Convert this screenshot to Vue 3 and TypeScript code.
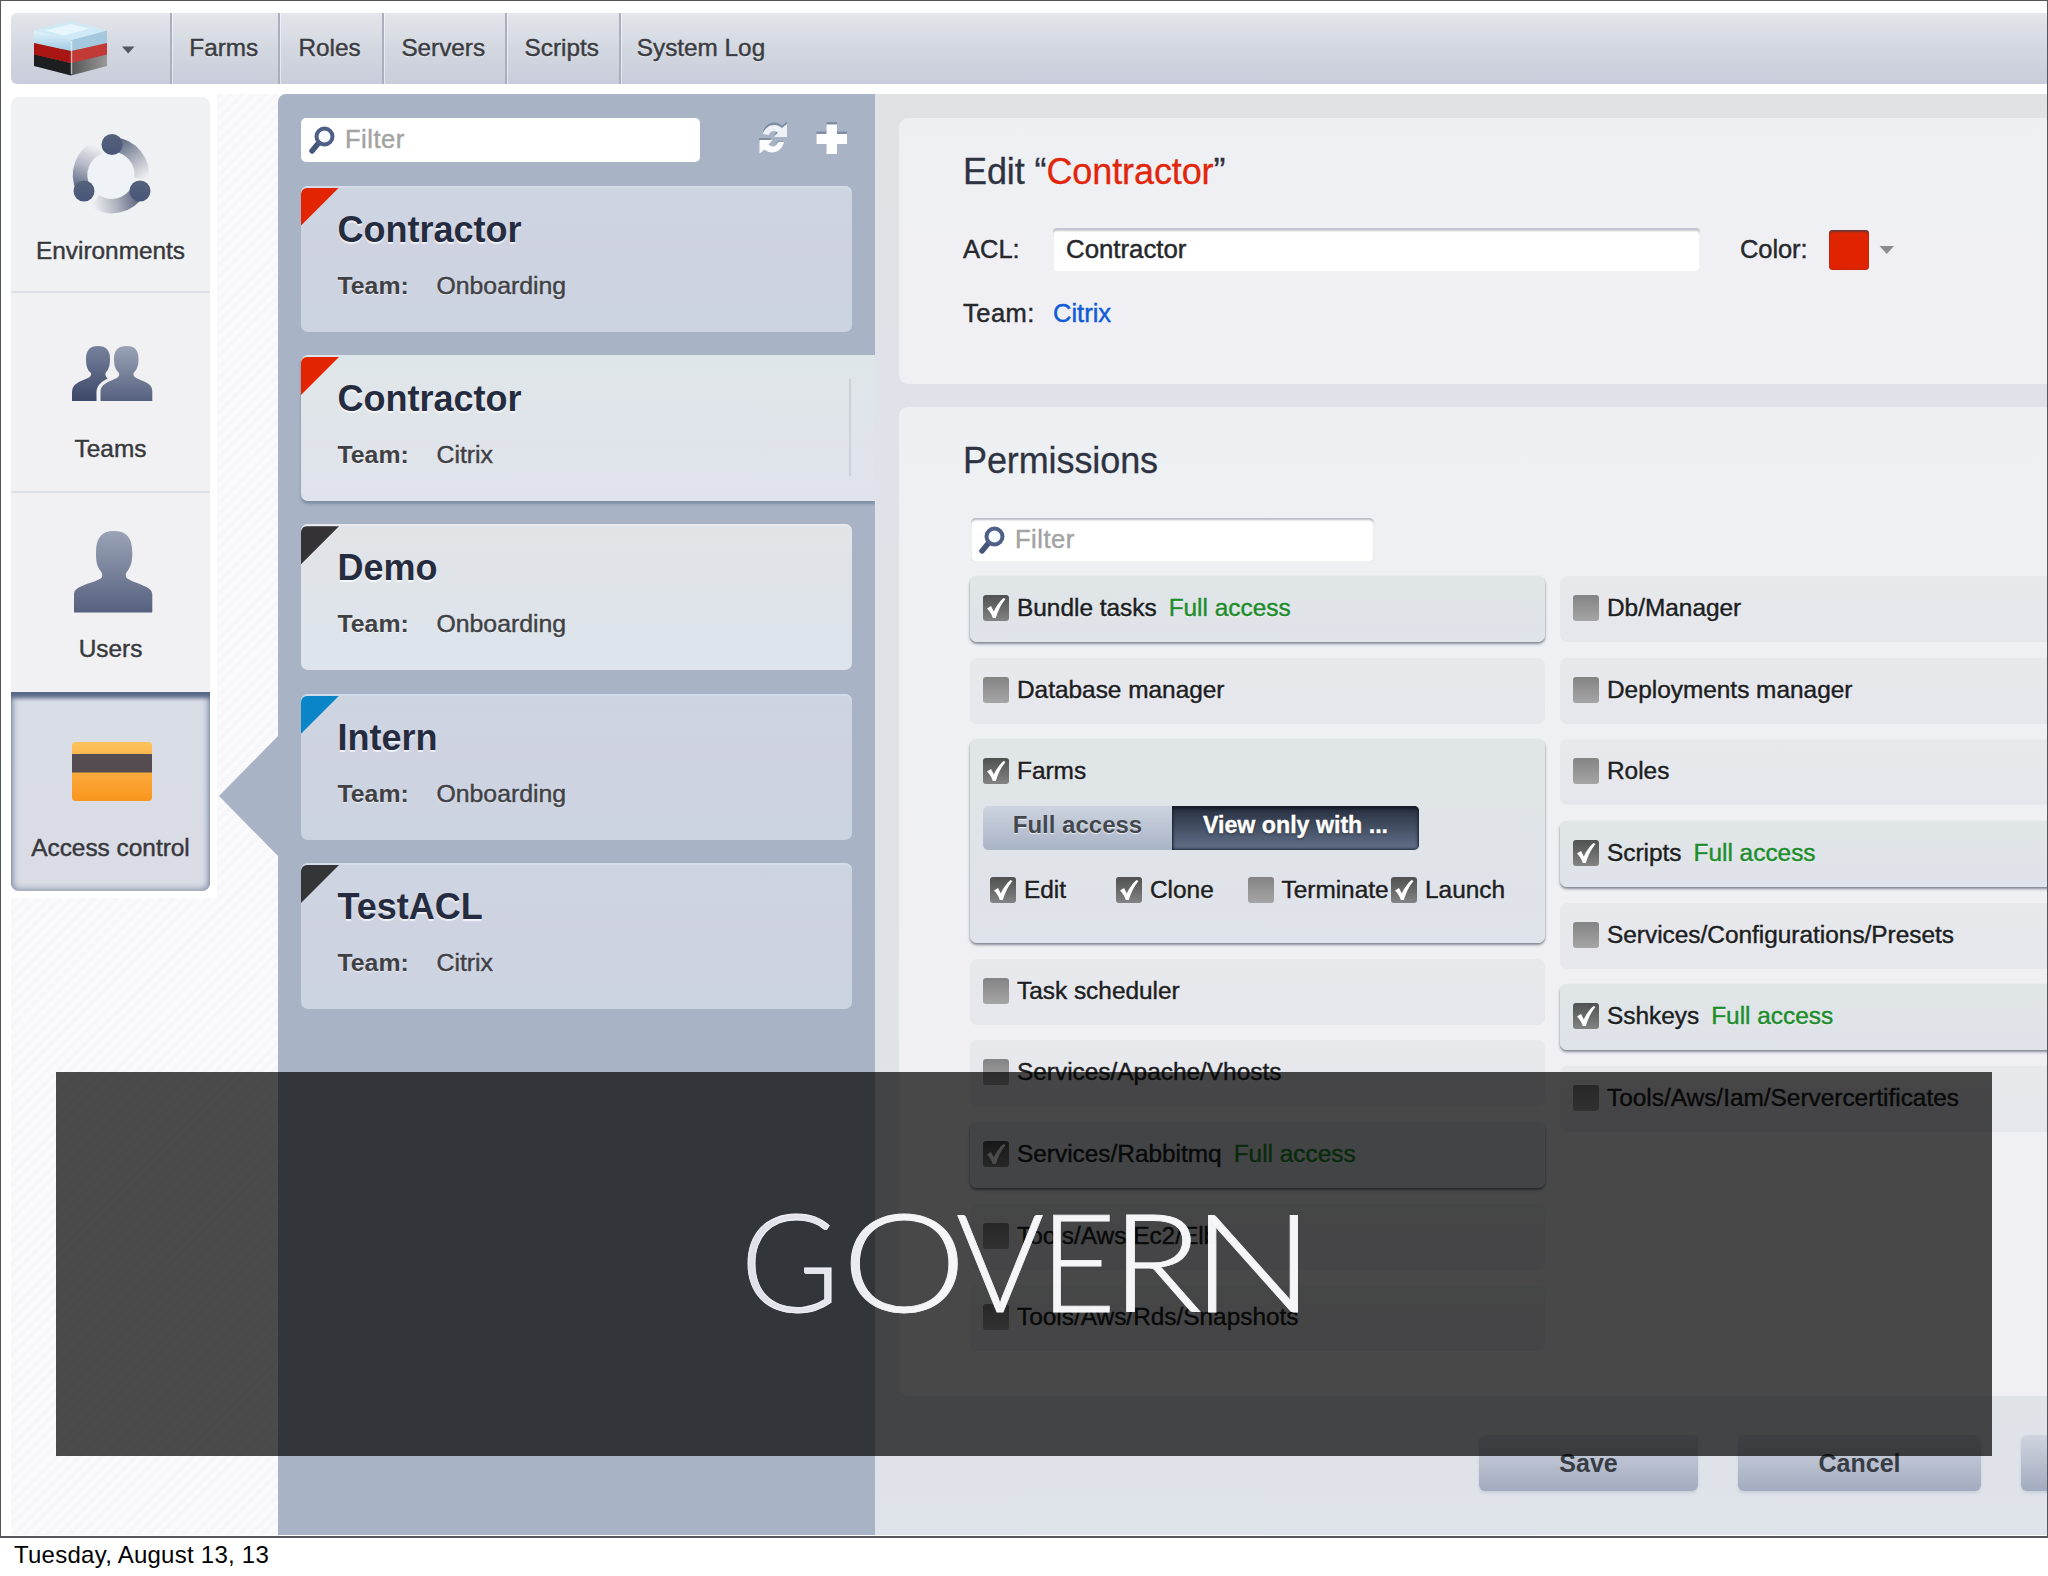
<script setup lang="ts">
interface Acl { name: string; team: string; color: string; state?: string }
interface Perm { name: string; on?: boolean; actions?: { name: string; on: boolean; w: number }[] }

const nav = [
  { label: 'Farms', w: 107.5 },
  { label: 'Roles', w: 104 },
  { label: 'Servers', w: 123.5 },
  { label: 'Scripts', w: 113.5 },
  { label: 'System Log', w: 165 },
]

// Banner letters: left origin and advance width of each
const letters = [
  { c: 'G', x: 740, w: 100 },
  { c: 'O', x: 842, w: 124.5 },
  { c: 'V', x: 956, w: 88 },
  { c: 'E', x: 1040, w: 76 },
  { c: 'R', x: 1111, w: 91 },
  { c: 'N', x: 1191.5, w: 123 },
]

const acls: Acl[] = [
  { name: 'Contractor', team: 'Onboarding', color: '#e22400' },
  { name: 'Contractor', team: 'Citrix', color: '#e22400', state: 'selected' },
  { name: 'Demo', team: 'Onboarding', color: '#353235', state: 'light' },
  { name: 'Intern', team: 'Onboarding', color: '#0a85c8' },
  { name: 'TestACL', team: 'Citrix', color: '#333536' },
]

const columns: Perm[][] = [
  [
    { name: 'Bundle tasks', on: true },
    { name: 'Database manager' },
    {
      name: 'Farms',
      on: true,
      actions: [
        { name: 'Edit', on: true, w: 126 },
        { name: 'Clone', on: true, w: 131.5 },
        { name: 'Terminate', on: false, w: 143.5 },
        { name: 'Launch', on: true, w: 120 },
      ],
    },
    { name: 'Task scheduler' },
    { name: 'Services/Apache/Vhosts' },
    { name: 'Services/Rabbitmq', on: true },
    { name: 'Tools/Aws/Ec2/Elb' },
    { name: 'Tools/Aws/Rds/Snapshots' },
  ],
  [
    { name: 'Db/Manager' },
    { name: 'Deployments manager' },
    { name: 'Roles' },
    { name: 'Scripts', on: true },
    { name: 'Services/Configurations/Presets' },
    { name: 'Sshkeys', on: true },
    { name: 'Tools/Aws/Iam/Servercertificates' },
  ],
]
</script>

<template>
  <div class="page">
    <div class="slide">
      <nav class="nav">
        <div class="brand">
          <svg width="159" height="71" viewBox="0 0 159 71">
            <defs>
              <linearGradient id="ice" x1="0" y1="0" x2="0" y2="1"><stop offset="0" stop-color="#e4f4fb" /><stop offset="1" stop-color="#9fcbe4" /></linearGradient>
              <linearGradient id="coal" x1="0" y1="0" x2="1" y2="0"><stop offset="0" stop-color="#555" /><stop offset="1" stop-color="#999" /></linearGradient>
            </defs>
            <path d="M23 41 L60 50 V62.500 L23 53Z" fill="#1c1e1f" />
            <path d="M60 50 L96 41 V53 L60 62.500Z" fill="url(#coal)" />
            <path d="M23 41 L60 50 L96 41 L60 34Z" fill="#26282a" />
            <path d="M23 29 L60 38 V50 L23 41.500Z" fill="#a81512" />
            <path d="M60 38 L96 29 V41.500 L60 50Z" fill="#c23a35" />
            <path d="M23 17.500 L60 27 V38 L23 30Z" fill="url(#ice)" />
            <path d="M60 27 L96 17.500 V30 L60 38Z" fill="#a4c9df" />
            <path d="M23 17.500 L60 8 L96 17.500 L60 27Z" fill="#cfeaf6" />
            <path d="M34 17.500 L60 11 L78 15.500 L54 22.500Z" fill="#e6f6fc" />
            <path d="M60.500 28 V61" stroke="#fff" stroke-opacity=".6" stroke-width="1.500" />
            <path d="M111 33.500 H123.500 L117.200 40.500Z" fill="#55565e" />
          </svg>
        </div>
        <a v-for="n in nav" :key="n.label" class="nav-item" :style="{ width: n.w + 'px' }">{{ n.label }}</a>
      </nav>

      <div class="body">
        <aside class="side">
          <div class="menu">
            <div class="tile first">
              <svg width="199" height="147" viewBox="0 0 199 147">
                <defs>
                  <linearGradient id="dot" x1="0" y1="0" x2="0" y2="1"><stop offset="0" stop-color="#56637c" /><stop offset="1" stop-color="#485578" /></linearGradient>
                  <linearGradient id="a1" gradientUnits="userSpaceOnUse" x1="104" y1="48" x2="131" y2="84"><stop offset="0" stop-color="#5f6c84" /><stop offset=".45" stop-color="#a4aab8" /><stop offset="1" stop-color="#f0f0f2" /></linearGradient>
                  <linearGradient id="a2" gradientUnits="userSpaceOnUse" x1="126" y1="98" x2="82" y2="108"><stop offset="0" stop-color="#5d6780" /><stop offset=".5" stop-color="#b0b3c0" /><stop offset="1" stop-color="#f0f0f3" /></linearGradient>
                  <linearGradient id="a3" gradientUnits="userSpaceOnUse" x1="72" y1="92" x2="88" y2="50"><stop offset="0" stop-color="#606c88" /><stop offset=".5" stop-color="#b4b7c6" /><stop offset="1" stop-color="#f0f1f3" /></linearGradient>
                </defs>
                <circle cx="100.500" cy="78" r="23" fill="#eff2f7" />
                <g fill="none" stroke-width="14.500">
                  <path d="M103 47.500 A30.300 30.300 0 0 1 130.500 82" stroke="url(#a1)" />
                  <path d="M127 94 A30.300 30.300 0 0 1 84 104" stroke="url(#a2)" />
                  <path d="M72.500 92 A30.300 30.300 0 0 1 88 50" stroke="url(#a3)" />
                </g>
                <g fill="url(#dot)"><circle cx="101" cy="47.500" r="10.500" /><circle cx="73" cy="94" r="10.500" /><circle cx="129" cy="94" r="10.500" /></g>
              </svg>
              <span>Environments</span>
            </div>
            <div class="tile">
              <svg width="199" height="149" viewBox="0 -1 199 149">
                <defs>
                  <linearGradient id="t1" x1="0" y1="0" x2="0" y2="1"><stop offset="0" stop-color="#76829c" /><stop offset="1" stop-color="#3c4769" /></linearGradient>
                  <linearGradient id="t2" x1="0" y1="0" x2="0" y2="1"><stop offset="0" stop-color="#9aa3b6" /><stop offset="1" stop-color="#56617f" /></linearGradient>
                </defs>
                <path d="M61 107 V99 C61 92 64 90 70 87 C77 84 81 83 80 79 C76 76 75 71 75 65 C75 56 79 52 87 52 C95 52 99 56 99 65 C99 71 98 75 94.500 79 C94 81 95 83 96.500 84.500 C88 89 85.500 93 85.500 99 V107Z" fill="url(#t1)" />
                <path d="M89.500 107 V98 C89.500 92 93 90 99 87 C106 84 109 83 108 79 C104 75 103 71 103 65 C103 56 107 52 115.500 52 C124 52 127.500 56 127.500 65 C127.500 71 126.500 75 122.500 79 C122 83 125 84 132 87 C139 90 141.300 92 141.300 98 V107Z" fill="url(#t2)" />
              </svg>
              <span>Teams</span>
            </div>
            <div class="tile">
              <svg width="199" height="149" viewBox="0 0 199 149">
                <path d="M64 119.500 C63.200 119.500 63 119 63 118 V102 C63 97 66 95 71 93 C80 89 90 87 91 84 C91.500 81.500 91 79.500 89.500 78 C86 73 85 69 85 60 C85 45 90 38 103 38 C116 38 121.300 45 121.300 60 C121.300 69 120 73 116.500 78 C115 79.500 114.500 81.500 115 84 C116 87 125 89 133 93 C138 95 141.300 97 141.300 102 V118 C141.300 119 141 119.500 140 119.500Z" fill="url(#t2)" />
              </svg>
              <span>Users</span>
            </div>
            <div class="tile active">
              <svg width="199" height="149" viewBox="0 0 199 149">
                <defs><linearGradient id="card" x1="0" y1="0" x2="0" y2="1"><stop offset="0" stop-color="#ffc35c" /><stop offset=".3" stop-color="#fcb34a" /><stop offset="1" stop-color="#f9951d" /></linearGradient></defs>
                <rect x="61" y="50" width="80" height="59" rx="4" fill="url(#card)" />
                <rect x="61" y="62" width="80" height="18.500" fill="#544c51" />
              </svg>
              <span>Access control</span>
            </div>
          </div>
          <svg class="pointer" width="60" height="120" viewBox="0 0 60 120"><path d="M60 0 L1 60 L60 120Z" fill="#a8b4c5" /></svg>
        </aside>

        <section class="list">
          <div class="tools">
            <div class="filter">
              <svg width="26" height="28" viewBox="0 0 26 28"><path d="M10 16.500 L3 25" stroke="#46557a" stroke-width="5.500" stroke-linecap="round" /><circle cx="15.500" cy="10.500" r="8" fill="#f7faff" stroke="#4e5f88" stroke-width="4" /></svg>
              <span>Filter</span>
            </div>
            <svg class="acts" width="92" height="34" viewBox="0 0 92 34">
              <g fill="#7f8da1" transform="translate(0 -2.500)">
                <path d="M6 13 C8 4 19 1 25 7 L30 3 V16 H17 L21 11.500 C17 8.500 13 10 12 14Z" />
                <path d="M2 19.500 H14.500 L12 22.500 L2 24Z M19 23 H27 L25 27Z" />
                <path d="M69.500 3.500 H80 V13 H90 V23 H80 V32 H69.500 V23 H59.500 V13 H69.500Z" />
              </g>
              <path d="M6 13 C8 4 19 1 25 7 L30 3 V16 H17 L21 11.500 C17 8.500 13 10 12 14Z" fill="#eef1f6" />
              <path d="M27 21 C25 31 14 34.500 7.500 28.500 L2.500 32.500 V19 H15.500 L11.500 23.500 C15 27 20 25.500 21.500 21Z" fill="#fdfdff" />
              <path d="M69.500 3.500 H80 V13 H90 V23 H80 V33 H69.500 V23 H59.500 V13 H69.500Z" fill="#fff" />
            </svg>
          </div>
          <article v-for="(a, i) in acls" :key="i" class="card" :class="a.state">
            <i class="flag" :style="{ background: a.color }"></i>
            <h3>{{ a.name }}</h3>
            <p><b>Team:</b><span>{{ a.team }}</span></p>
          </article>
        </section>

        <main class="form">
          <section class="panel edit">
            <h2>Edit “<em>Contractor</em>”</h2>
            <div class="row">
              <label>ACL:</label>
              <div class="input">Contractor</div>
              <label class="clr">Color:</label>
              <i class="swatch"></i>
              <svg width="16" height="10" viewBox="0 0 16 10"><path d="M0.500 1 H15 L7.800 9Z" fill="#8b8c92" /></svg>
            </div>
            <div class="row team"><label>Team:</label><a>Citrix</a></div>
          </section>
          <section class="panel perms">
            <h2>Permissions</h2>
            <div class="filter inset">
              <svg width="26" height="28" viewBox="0 0 26 28"><path d="M10 16.500 L3 25" stroke="#46557a" stroke-width="5.500" stroke-linecap="round" /><circle cx="15.500" cy="10.500" r="8" fill="#f7faff" stroke="#4e5f88" stroke-width="4" /></svg>
              <span>Filter</span>
            </div>
            <div class="cols">
              <div v-for="(col, c) in columns" :key="c" class="col">
                <div v-for="p in col" :key="p.name" class="perm" :class="{ on: p.on, tall: p.actions }">
                  <div class="line">
                    <i class="cb" :class="{ checked: p.on }"><svg v-if="p.on" width="26" height="26" viewBox="0 0 26 26"><path d="M4 13.500 L8 11 L10.800 16.500 C13 11.500 16 7 20.500 3 L22.500 4 C18 9.500 15 15.500 12.800 23 H9.800 C8.500 19 7 16.500 4 13.500Z" fill="#fff" /></svg></i>
                    <span>{{ p.name }}</span>
                    <span v-if="p.on && !p.actions" class="full">Full access</span>
                  </div>
                  <template v-if="p.actions">
                    <div class="seg"><b>Full access</b><b class="sel">View only with ...</b></div>
                    <div class="line subs">
                      <div v-for="s in p.actions" :key="s.name" class="line" :style="{ width: s.w + 'px' }">
                        <i class="cb" :class="{ checked: s.on }"><svg v-if="s.on" width="26" height="26" viewBox="0 0 26 26"><path d="M4 13.500 L8 11 L10.800 16.500 C13 11.500 16 7 20.500 3 L22.500 4 C18 9.500 15 15.500 12.800 23 H9.800 C8.500 19 7 16.500 4 13.500Z" fill="#fff" /></svg></i>
                        <span>{{ s.name }}</span>
                      </div>
                    </div>
                  </template>
                </div>
              </div>
            </div>
          </section>
          <div class="buttons">
            <button style="width: 219px">Save</button>
            <button style="width: 243px">Cancel</button>
            <button style="width: 200px"></button>
          </div>
        </main>
      </div>

      <div class="banner">
        <svg width="1936" height="384" viewBox="56 1072 1936 384">
          <defs><linearGradient id="gv" gradientUnits="userSpaceOnUse" x1="740" y1="0" x2="900" y2="0"><stop offset="0" stop-color="#e5e5f1" /><stop offset=".6" stop-color="#ebebf4" /><stop offset="1" stop-color="#fbfbfd" /></linearGradient></defs>
          <text y="1312" fill="url(#gv)"><tspan v-for="l in letters" :key="l.c" :x="l.x" :textLength="l.w" lengthAdjust="spacingAndGlyphs">{{ l.c }}</tspan></text>
        </svg>
      </div>
    </div>
    <footer>Tuesday, August 13, 13</footer>
  </div>
</template>

<style>
html, body { margin: 0; background: #fff; overflow: hidden; }
</style>

<style scoped>
.page { width: 2048px; height: 1576px; overflow: hidden; background: #fff; font-family: "Liberation Sans", Arial, sans-serif; font-size: 24.4px; color: #26282c; -webkit-text-stroke: .45px currentColor; }
.slide { position: relative; box-sizing: border-box; height: 1538px; border: 1px solid #55555c; border-bottom-width: 2px; overflow: hidden; }
.nav { display: flex; height: 71px; margin: 12px 0 0 10px; border-radius: 6px 0 0 6px; background: linear-gradient(#e3e7eb, #d3d7e0 50%, #c9cddb); overflow: hidden; text-shadow: 0 1px 1px rgba(255, 255, 255, .7); color: #3a3c42; }
.brand { width: 159px; flex: none; }
.nav-item { box-sizing: border-box; flex: none; padding-right: 2px; border-left: 2px solid #a9afbd; box-shadow: inset 1px 0 0 rgba(255, 255, 255, .5); text-align: center; line-height: 70px; font-size: 24.3px; }
.body { display: flex; height: 1441px; margin: 10px 0 0 10px; }
.side { position: relative; width: 266.5px; flex: none; background: repeating-linear-gradient(135deg, #fbfbfd 0, #f6f6f8 4px, #fbfbfd 8px); }
.menu { width: 199px; padding: 3px 7px 7px 0; background: #fff; }
.tile { box-sizing: border-box; display: flex; flex-direction: column; align-items: center; height: 200px; border-bottom: 2px solid #dde0e6; background: #f1f1f4; color: #37383c; }
.tile.first { height: 196px; border-radius: 8px 8px 0 0; background: #f0f1f3; }
.tile:nth-child(3) { height: 199px; border-bottom: 0; }
.tile svg { flex: none; }
.tile span { line-height: 14px; text-shadow: 0 1px 1px #fff; }
.tile.active { height: 199px; border: 0; border-radius: 0 0 8px 8px; background: linear-gradient(#d8dde6, #dadce5); box-shadow: inset 0 7px 4px -1px #596884, inset 0 0 6px 2px #8c99b2; }
.tile.active span { text-shadow: none; }
.pointer { position: absolute; right: 0; top: 642px; }

.list { box-sizing: border-box; width: 597.5px; flex: none; padding: 24px 0 0 23.500px; background: #a8b4c5; border-radius: 8px 0 0 0; overflow: hidden; }
.tools { display: flex; align-items: center; height: 44px; margin-bottom: 23.500px; }
.acts { margin-left: 57px; margin-top: -4px; }
.filter { box-sizing: border-box; display: flex; align-items: center; width: 399px; height: 44px; padding-left: 8px; border-radius: 5px; background: #fff; color: #a3a3a3; font-size: 25.500px; }
.filter span { margin-left: 10px; line-height: 40px; margin-top: -2px; letter-spacing: .5px; }
.inset { width: 403px; margin: 0 0 14px 8px; box-shadow: inset 0 3px 2px -1px #b9bac4, inset 0 0 2px #c8cad2; }
.card { position: relative; box-sizing: border-box; width: 551px; height: 146px; margin-bottom: 23.400px; padding: 24px 0 0 36.500px; border-radius: 7px; background: linear-gradient(#cdd5e1, #cfd3e1 40%, #ccd4e1); overflow: hidden; box-shadow: inset 0 2px 0 #d3dce8; }
.card.light { background: linear-gradient(#e1e4e7, #dde4ec); box-shadow: inset 0 2px 0 #e8e8ee; }
.card.selected { width: 574px; border-radius: 7px 0 0 7px; background: linear-gradient(#dfe6e9, #e0e3eb); overflow: visible; box-shadow: 0 3px 3px #7c8da3; }
.card.selected::after { content: ""; position: absolute; left: 548px; top: 24px; width: 2px; height: 97px; background: #ccd0d9; }
.flag { position: absolute; left: 0; top: 2px; width: 38px; height: 38px; clip-path: polygon(0 0, 100% 0, 0 100%); border-radius: 6px 0 0 0; }
h3 { margin: 0; font-size: 36px; line-height: 40px; font-weight: 700; color: #262c3f; text-shadow: 0 2px 1px rgba(255, 255, 255, .7); -webkit-text-stroke: 0; }
.card p { display: flex; margin: 21px 0 0; line-height: 30px; font-size: 24.800px; color: #3f4144; text-shadow: 0 1px 1px rgba(255, 255, 255, .6); }
.card b { width: 99px; -webkit-text-stroke: 0; }

.form { flex: 1; min-width: 0; padding: 24px 0 0 24px; background: linear-gradient(#dfe3e5, #dfe2e8 20%, #dfe4e7 80%, #dfe3ea); overflow: hidden; }
.panel { box-sizing: border-box; padding-left: 64px; border-radius: 9px 0 0 9px; background: linear-gradient(#edf0f3, #f0f0f4 50%); overflow: hidden; }
.edit { height: 266px; margin-bottom: 23px; }
.perms { height: 989px; }
h2 { margin: 34px 0 0; font-size: 36px; line-height: 40px; font-weight: 400; color: #2e3342; letter-spacing: -.1px; -webkit-text-stroke: .3px currentColor; }
em { font-style: normal; color: #e1250a; }
.row { display: flex; align-items: center; height: 44px; margin-top: 36px; }
.row label { width: 90px; margin-top: -2px; font-size: 25.500px; }
.input { box-sizing: border-box; width: 647px; height: 44px; padding-left: 13px; border-radius: 4px; background: #fff; line-height: 42px; font-size: 25.800px; box-shadow: inset 0 5px 2px -2px #c3c4cf, inset 0 0 2px #cdced6; }
.row label.clr { width: 90px; margin-left: 40px; margin-right: -1px; letter-spacing: -.1px; }
.swatch { width: 40px; height: 40px; border-radius: 4px; background: #e12400; box-shadow: inset 0 3px 2px -1px #6e3a38, inset 0 0 2px #8c2b1a; margin-right: 10px; }
.row.team { margin-top: 20px; }
.row.team label { letter-spacing: .5px; }
.row.team a { margin-top: -2px; color: #0f5bd8; font-size: 25.500px; }
.perms h2 { margin: 34px 0 37px; }
.cols { display: flex; gap: 15px; margin-left: 7px; }
.col { display: flex; flex-direction: column; gap: 15.700px; width: 575px; flex: none; }
.perm { box-sizing: border-box; height: 66px; padding: 17px 0 0 13px; border-radius: 7px; background: linear-gradient(#e7e9ec, #e6e6ed); text-shadow: 0 1px 1px rgba(255, 255, 255, .8); }
.perm.on { background: linear-gradient(#e0e5e7, #dfe3ea); box-shadow: 0 2px 3px #8c909b, 0 1px 1px #8c909b; }
.perm.tall { height: 203.500px; }
.line { display: flex; align-items: center; height: 30px; white-space: nowrap; color: #1c1e22; }
.cb { width: 26px; height: 26px; margin-right: 8px; border-radius: 3px; background: linear-gradient(#848484, #a5a5a5); flex: none; }
.cb.checked { background: linear-gradient(#4f5050, #838383); }
.cb svg { display: block; }
.full { margin-left: 12px; color: #1d8c2b; }
.seg { display: flex; width: 436px; height: 44px; margin: 20px 0 25px; border-radius: 5px; overflow: hidden; font-size: 24px; line-height: 38px; text-align: center; -webkit-text-stroke: 0; }
.seg b { width: 189px; background: linear-gradient(#cdd4e0, #a9b4c6); color: #43474e; }
.seg .sel { flex: 1; background: linear-gradient(#252c3c, #3b4659 35%, #62708a); color: #fff; font-size: 23.200px; box-shadow: inset 0 4px 3px -1px #161b27, inset 0 0 3px 1px #1c2231; text-shadow: 0 1px 2px #222; -webkit-text-stroke: .4px #fff; }
.subs { margin-left: 7px; }
.subs .cb { margin-right: 8px; }
.buttons { display: flex; gap: 40px; margin: 39px 0 0 580px; }
button { flex: none; height: 56px; padding: 0; border: 0; border-radius: 6px; background: linear-gradient(#cfd4df, #a2abbf); box-shadow: 0 2px 3px rgba(150, 160, 180, .3); font: 700 25px "Liberation Sans", Arial, sans-serif; color: #383c44; -webkit-text-stroke: 0; }
.banner { position: absolute; left: 55px; top: 1071px; width: 1936px; height: 384px; background: rgba(0, 0, 0, .7); }
.banner svg { display: block; }
.banner text { font-family: Lato, sans-serif; font-weight: 300; font-size: 136px; fill-opacity: .97; stroke: #f6f6fa; stroke-width: .8px; -webkit-text-stroke: .8px #f6f6fa; }
footer { padding-left: 14px; font-size: 24px; letter-spacing: .25px; line-height: 34px; color: #000; -webkit-text-stroke: 0; }
</style>
